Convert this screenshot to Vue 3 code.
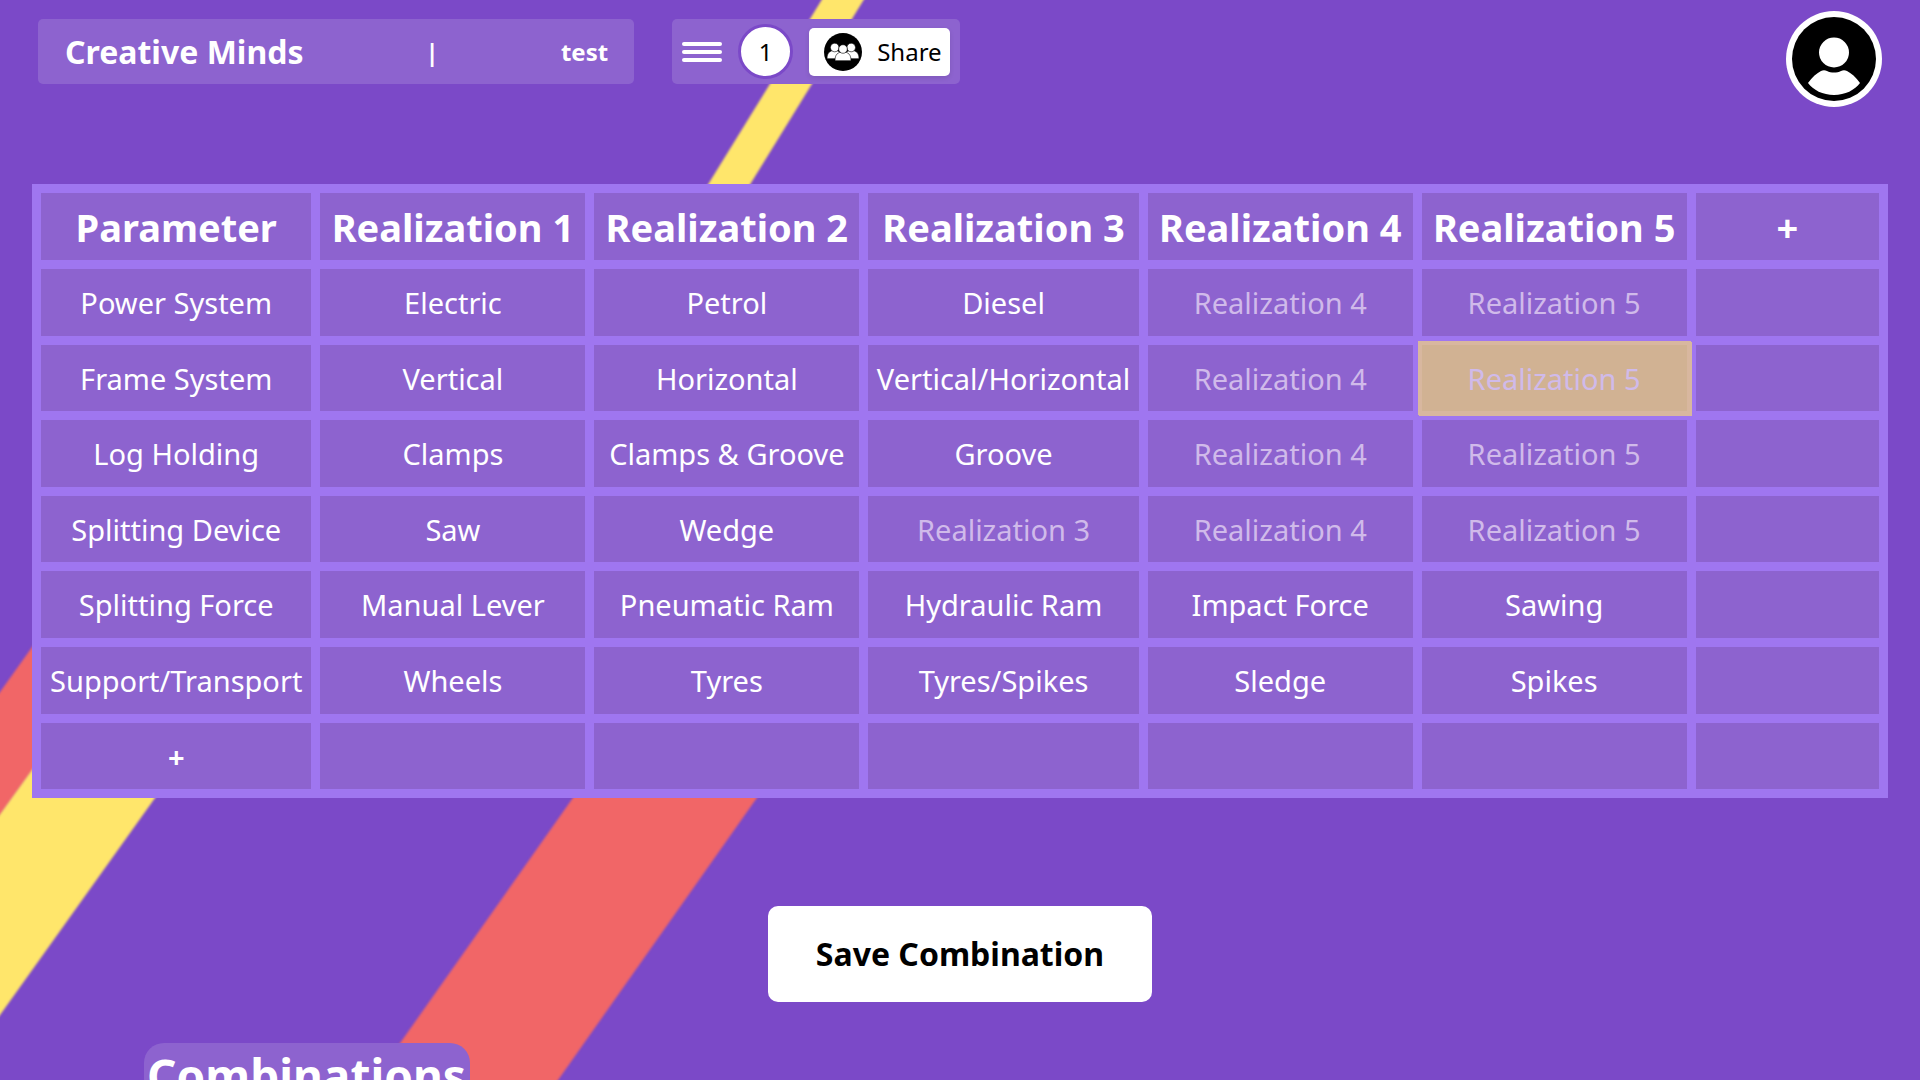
<script setup>
import { ref } from 'vue'

const project = ref('Creative Minds')
const session = ref('test')
const headers = ['Parameter', 'Realization 1', 'Realization 2', 'Realization 3', 'Realization 4', 'Realization 5']
const rows = [
  ['Power System', 'Electric', 'Petrol', 'Diesel', '', ''],
  ['Frame System', 'Vertical', 'Horizontal', 'Vertical/Horizontal', '', ''],
  ['Log Holding', 'Clamps', 'Clamps & Groove', 'Groove', '', ''],
  ['Splitting Device', 'Saw', 'Wedge', '', '', ''],
  ['Splitting Force', 'Manual Lever', 'Pneumatic Ram', 'Hydraulic Ram', 'Impact Force', 'Sawing'],
  ['Support/Transport', 'Wheels', 'Tyres', 'Tyres/Spikes', 'Sledge', 'Spikes'],
]
const selected = ref({ row: 1, col: 5 })
const isSelected = (r, c) => selected.value.row === r && selected.value.col === c
const select = (row, col) => {
  if (col > 0) selected.value = { row, col }
}
</script>

<template>
  <div class="page">
    <svg class="stripes" viewBox="0 0 1920 1080" preserveAspectRatio="none" aria-hidden="true">
      <polygon points="829,-12 871,-12 738,204 696,204" fill="#ffe66b" />
      <polygon points="-20,720 60,608 60,731 -20,842" fill="#f16667" />
      <polygon points="-20,842 60,731 200,735 -20,1043" fill="#ffe66b" />
      <polygon points="601,758 785,758 544,1100 360,1100" fill="#f16667" />
    </svg>

    <header class="topbar">
      <div class="card names">
        <h1>{{ project }}</h1>
        <span>|</span>
        <span>{{ session }}</span>
      </div>
      <div class="card tools">
        <button class="menu" aria-label="Menu"><i></i><i></i><i></i></button>
        <span class="count">1</span>
        <button class="share">
          <svg viewBox="0 0 38 38" aria-hidden="true">
            <circle cx="19" cy="19" r="19" />
            <g fill="#fff" stroke="#000" stroke-width="0.6">
              <path d="M3 25.700c0-5.500 2.500-8.200 7.500-8.200s7.500 2.700 7.500 8.200z" />
              <circle cx="10.700" cy="14.500" r="4.300" />
              <path d="M20 25.700c0-5.500 2.500-8.200 7.500-8.200s7.500 2.700 7.500 8.200z" />
              <circle cx="27.200" cy="14.500" r="4.300" />
              <path d="M11 27.700c0-6 2.500-8.700 8-8.700s8 2.700 8 8.700z" />
              <circle cx="19" cy="16" r="4.300" />
            </g>
          </svg>
          Share
        </button>
      </div>
      <button class="avatar" aria-label="Account">
        <svg viewBox="0 0 96 96" aria-hidden="true">
          <circle cx="48" cy="48" r="48" fill="#fff" />
          <circle cx="48" cy="48" r="42" />
          <circle cx="48" cy="41.500" r="15" fill="#fff" />
          <path d="M22 72c4-6 9-10 13-12 2-1 4-1 6 0 4 2 10 2 14 0 2-1 4-1 6 0 4 2 9 6 13 12-5 7-15 12-26 12s-21-5-26-12z" fill="#fff" />
        </svg>
      </button>
    </header>

    <main>
      <table>
        <colgroup>
          <col class="first" /><col class="mid" /><col class="mid" /><col class="first" /><col class="mid" /><col class="mid" /><col />
        </colgroup>
        <thead>
          <tr>
            <th v-for="h in headers" :key="h" scope="col">{{ h }}</th>
            <th><button class="add" aria-label="Add realization">+</button></th>
          </tr>
        </thead>
        <tbody>
          <tr v-for="(row, r) in rows" :key="row[0]">
            <td
              v-for="(cell, c) in row"
              :key="c"
              :class="{ empty: !cell, selected: isSelected(r, c) }"
              @click="select(r, c)"
            >{{ cell || headers[c] }}</td>
            <td></td>
          </tr>
          <tr>
            <td><button class="add" aria-label="Add parameter">+</button></td>
            <td v-for="n in 6" :key="n"></td>
          </tr>
        </tbody>
      </table>
      <button class="save">Save Combination</button>
      <h2>Combinations</h2>
    </main>
  </div>
</template>

<style>
body {
  background: #7b49c8;
}
</style>

<style scoped>
.page {
  position: relative;
  height: 100vh;
  overflow: hidden;
  box-sizing: border-box;
  background: #7b49c8;
  color: #fff;
  font-family: "Noto Sans", sans-serif;
  font-size: 24px;
}
.stripes {
  position: absolute;
  inset: 0;
  width: 100%;
  height: 100%;
  overflow: visible;
  filter: blur(1px);
}
button {
  margin: 0;
  padding: 0;
  border: 0;
  background: none;
  color: inherit;
  font: inherit;
  cursor: pointer;
}
h1,
h2 {
  margin: 0;
}
.topbar {
  position: relative;
  display: flex;
  align-items: flex-start;
  padding: 11px 38px 0;
}
.card {
  display: flex;
  align-items: center;
  box-sizing: border-box;
  height: 65px;
  margin-top: 8px;
  border-radius: 5px;
  background: #8d63cf;
}
.names {
  justify-content: space-between;
  width: calc(31vw + 1px);
  padding: 0 26px 0 27px;
  font-weight: bold;
}
h1 {
  font-size: 32px;
}
.tools {
  margin-left: 38px;
  padding: 0 10px;
}
.menu {
  display: flex;
  flex-direction: column;
  gap: 4px;
  width: 40px;
}
.menu i {
  height: 4px;
  border-radius: 2px;
  background: #fff;
}
.count {
  display: flex;
  align-items: center;
  justify-content: center;
  width: 49px;
  height: 49px;
  margin: 0 16px;
  border: 3px solid #7b49c8;
  border-radius: 50%;
  background: #fff;
  color: #000;
}
.share {
  display: flex;
  align-items: center;
  gap: 15px;
  height: 48px;
  padding: 0 8px 0 15px;
  border-radius: 5px;
  background: #fff;
  box-shadow: 0 2px 5px rgba(0, 0, 0, 0.1);
  color: #000;
}
.share svg {
  width: 38px;
  height: 38px;
}
.avatar {
  width: 96px;
  height: 96px;
  margin-left: auto;
  border-radius: 50%;
}
.avatar svg {
  display: block;
}
main {
  position: relative;
  display: flex;
  flex-direction: column;
  align-items: center;
  margin-top: 77px;
  padding: 0 32px;
}
table {
  width: 100%;
  table-layout: fixed;
  border-collapse: separate;
  border-spacing: 9px;
  background: #9f76f0;
  font-size: 29px;
  text-align: center;
}
.first {
  width: 15.16%;
}
.mid {
  width: 14.85%;
}
th,
td {
  height: 67px;
  padding: 0;
  background: #8d63cf;
  white-space: nowrap;
}
tr:nth-child(2) td,
tr:nth-child(4) td,
tr:nth-child(7) td {
  height: 66px;
}
th {
  font-size: 38px;
}
.empty {
  color: #d0baea;
}
.selected {
  background: #d1b293;
  box-shadow: 0 0 0 4px #d8b79f, 1px 1px 0 4px #d8b79f;
}
.add {
  width: 100%;
  font-weight: bold;
}
.save {
  width: 20vw;
  height: 96px;
  margin-top: 108px;
  padding-bottom: 2px;
  border-radius: 10px;
  background: #fff;
  color: #000;
  font-size: 32px;
  font-weight: bold;
}
h2 {
  align-self: flex-start;
  margin: 41px 0 0 112px;
  padding: 1px 4px 0 3px;
  border-radius: 20px;
  background: #8d63cf;
  font-size: 46px;
}
</style>
